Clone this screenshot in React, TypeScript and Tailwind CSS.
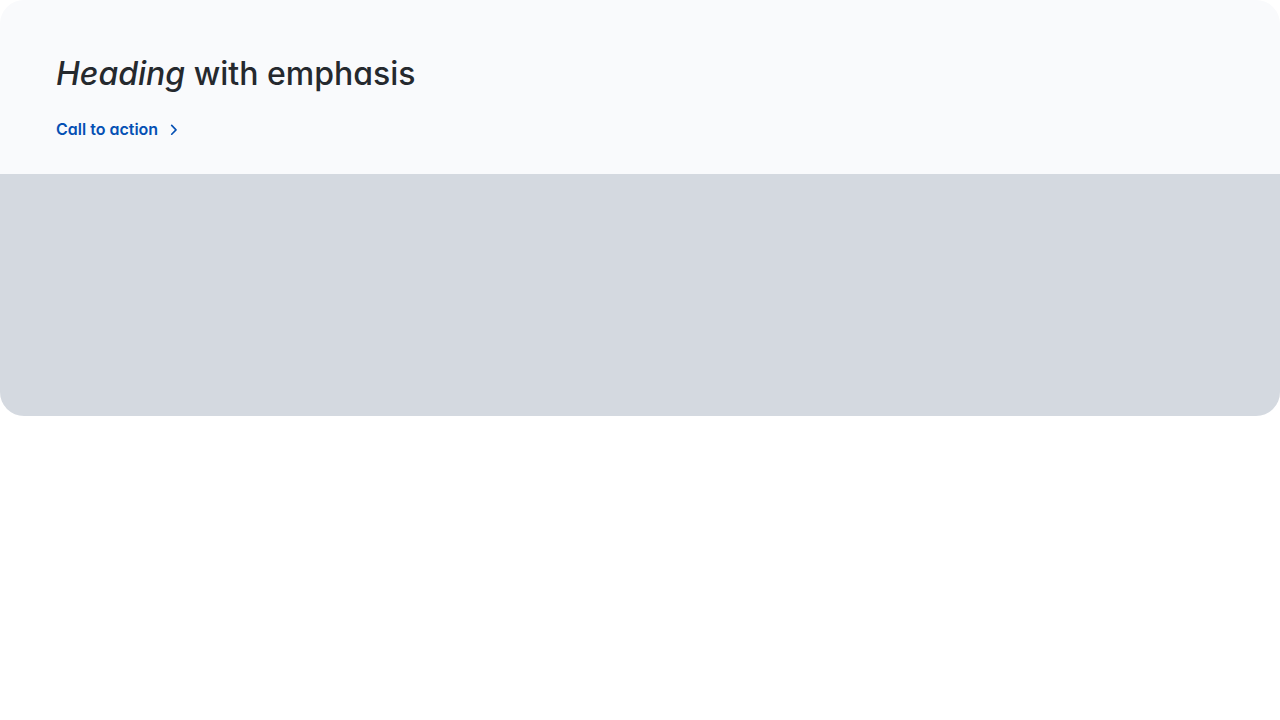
export default function App() {
  return (
    <section className="overflow-hidden rounded-3xl bg-[#f9fafc] font-['Inter',sans-serif] [font-feature-settings:'cv11']">
      <div className="flex flex-col items-start gap-6 px-14 pt-14 pb-8">
        <h2 className="text-[32px] leading-9 font-medium text-[#25292e]">
          <em>Heading</em> with emphasis
        </h2>
        <a href="#" className="flex items-center gap-3 text-base leading-[26px] font-semibold text-[#0550b4]">
          Call to action
          <svg className="h-3 w-2" viewBox="0 0 8 12" fill="none" stroke="currentColor" strokeWidth="1.6" strokeLinecap="round" strokeLinejoin="round" aria-hidden="true">
            <path d="M1.7 2.4 6 6.9 1.7 11.2" />
          </svg>
        </a>
      </div>
      <div className="h-[242px] bg-[#d4d9e0]" />
    </section>
  );
}
